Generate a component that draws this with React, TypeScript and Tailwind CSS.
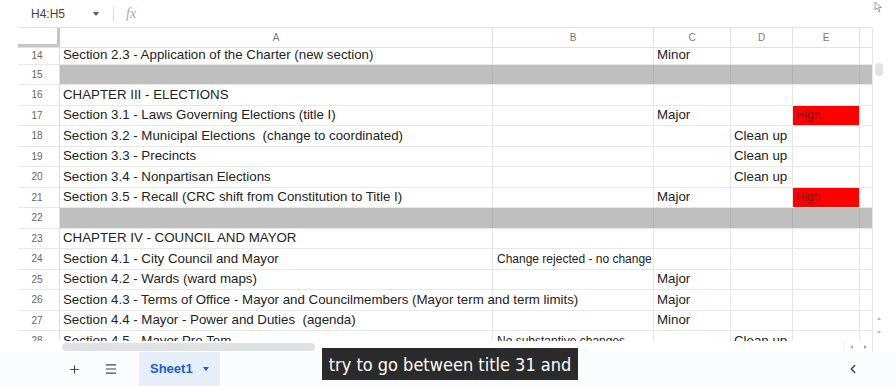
import { Plus, Menu, ChevronLeft } from "lucide-react"

type Row = {
  n: number
  a?: string
  b?: string
  c?: string
  d?: string
  high?: boolean
  gray?: boolean
}

const rows: Row[] = [
  { n: 14, a: "Section 2.3 - Application of the Charter (new section)", c: "Minor" },
  { n: 15, gray: true },
  { n: 16, a: "CHAPTER III - ELECTIONS" },
  { n: 17, a: "Section 3.1 - Laws Governing Elections (title I)", c: "Major", high: true },
  { n: 18, a: "Section 3.2 - Municipal Elections  (change to coordinated)", d: "Clean up" },
  { n: 19, a: "Section 3.3 - Precincts", d: "Clean up" },
  { n: 20, a: "Section 3.4 - Nonpartisan Elections", d: "Clean up" },
  { n: 21, a: "Section 3.5 - Recall (CRC shift from Constitution to Title I)", c: "Major", high: true },
  { n: 22, gray: true },
  { n: 23, a: "CHAPTER IV - COUNCIL AND MAYOR" },
  { n: 24, a: "Section 4.1 - City Council and Mayor", b: "Change rejected - no change" },
  { n: 25, a: "Section 4.2 - Wards (ward maps)", c: "Major" },
  { n: 26, a: "Section 4.3 - Terms of Office - Mayor and Councilmembers (Mayor term and term limits)", c: "Major" },
  { n: 27, a: "Section 4.4 - Mayor - Power and Duties  (agenda)", c: "Minor" },
  { n: 28, a: "Section 4.5 - Mayor Pro Tem", b: "No substantive changes", d: "Clean up" },
]

function Cell({ w, gray, red, children, overflow }: { w: string; gray?: boolean; red?: boolean; children?: React.ReactNode; overflow?: boolean }) {
  const bg = red ? "bg-[#ff0000] border-r-[#e4e4e4]" : gray ? "bg-[#c0bfc0] border-r-[#b2b2b2]" : "border-r-[#e4e4e4]"
  return (
    <div className={`${w} ${bg} relative flex h-full shrink-0 items-center border-r pl-[3px] ${overflow ? "overflow-visible" : "overflow-hidden"}`}>
      {children}
    </div>
  )
}

export default function App() {
  return (
    <div className="relative h-[386px] w-[896px] overflow-hidden bg-white font-['Liberation_Sans',Arial,sans-serif] text-[#222]">
      {/* formula bar */}
      <div className="flex h-[27px] items-center pl-[31px]">
        <span className="w-[62px] text-[12px] text-[#444]">H4:H5</span>
        <span className="h-0 w-0 border-x-[3.5px] border-t-[4px] border-x-transparent border-t-[#555]" />
        <span className="ml-[14px] h-[16px] w-px bg-[#dadce0]" />
        <span className="ml-[12px] font-['Liberation_Serif',serif] text-[14px] italic text-[#aaa]">fx</span>
        <svg className="absolute right-[13px] top-[1px]" width="9" height="12" viewBox="0 0 9 12">
          <path d="M1 1 L1 9 L3 7 L5 11 L6 10.5 L4.5 6.5 L7.5 6.5 Z" fill="white" stroke="#888" strokeWidth="0.8" />
        </svg>
      </div>

      {/* grid */}
      <div className="ml-[18px] flex w-[866px]">
        <div className="w-[854px]">
          {/* column header */}
          <div className="flex h-[21px] border-y border-[#e1e1e1] text-[10px] text-[#777]">
            <div className="h-full w-[42px] shrink-0 border-b-[3px] border-r-[3px] border-[#c4c4c4]" />
            {[
              ["A", "w-[433px]"],
              ["B", "w-[161px]"],
              ["C", "w-[77px]"],
              ["D", "w-[62px]"],
              ["E", "w-[67px]"],
            ].map(([l, w]) => (
              <div key={l} className={`${w} flex shrink-0 items-center justify-center border-r border-[#e1e1e1]`}>
                {l}
              </div>
            ))}
            <div className="w-[12px] shrink-0" />
          </div>

          {/* body */}
          <div className="h-[293px] overflow-hidden">
            <div className="-mt-[4px]">
              {rows.map((r) => (
                <div key={r.n} className={`flex h-[20.5px] border-b border-[#e8e8e8] text-[13.3px] ${r.n === 14 ? "pt-[3px]" : ""}`}>
                  <div className="flex h-full w-[42px] shrink-0 items-center justify-center border-r border-[#dcdcdc] pr-[3px] text-[10px] text-[#666]">
                    {r.n}
                  </div>
                  <Cell w="w-[433px]" gray={r.gray} overflow>
                    <span className="relative z-10 whitespace-pre">{r.a}</span>
                  </Cell>
                  <Cell w="w-[161px]" gray={r.gray}>
                    <span className="whitespace-nowrap pl-[1px] text-[12px]">{r.b}</span>
                  </Cell>
                  <Cell w="w-[77px]" gray={r.gray}>
                    <span className="whitespace-nowrap">{r.c}</span>
                  </Cell>
                  <Cell w="w-[62px]" gray={r.gray}>
                    <span className="whitespace-nowrap">{r.d}</span>
                  </Cell>
                  <Cell w="w-[67px]" gray={r.gray} red={r.high}>
                    {r.high && <span className="text-[12px] text-[#8a0d0d]">High</span>}
                  </Cell>
                  <div className={`h-full w-[12px] shrink-0 ${r.gray ? "bg-[#c0bfc0]" : ""}`} />
                </div>
              ))}
            </div>
          </div>

          {/* horizontal scrollbar */}
          <div className="flex h-[11px] items-center">
            <div className="ml-[44px] h-[8px] w-[253px] rounded-full bg-[#dfe1e5]" />
            <div className="ml-auto flex h-full w-[29px] items-center justify-around border-l border-[#eee]">
              <span className="h-0 w-0 border-y-[2.5px] border-r-[3px] border-y-transparent border-r-[#aaa]" />
              <span className="h-0 w-0 border-y-[2.5px] border-l-[3px] border-y-transparent border-l-[#aaa]" />
            </div>
          </div>
        </div>

        {/* vertical scrollbar */}
        <div className="flex w-[12px] flex-col items-center border-l border-[#e6e6e6]">
          <div className="h-[21px]" />
          <div className="mt-[15px] h-[13px] w-[8px] rounded-full bg-[#dfe1e5]" />
          <div className="flex-1" />
          <span className="h-0 w-0 border-x-[2.5px] border-b-[3px] border-x-transparent border-b-[#bbb]" />
          <span className="mb-[18px] mt-[11px] h-0 w-0 border-x-[2.5px] border-t-[3px] border-x-transparent border-t-[#bbb]" />
        </div>
      </div>

      {/* sheet tabs */}
      <div className="flex h-[34px] items-center bg-[#fbfcfe]">
        <Plus className="ml-[68px] h-[13px] w-[13px] text-[#444]" strokeWidth={2} />
        <Menu className="ml-[23px] h-[14px] w-[14px] text-[#444]" strokeWidth={2} />
        <div className="ml-[21px] flex h-full w-[81px] items-center bg-[#e6eefa] pl-[11px]">
          <span className="text-[13px] font-bold text-[#1a5fc8]">Sheet1</span>
          <span className="ml-[10px] h-0 w-0 border-x-[3.5px] border-t-[4px] border-x-transparent border-t-[#1a5fc8]" />
        </div>
        <ChevronLeft className="ml-auto mr-[36px] h-[14px] w-[14px] text-[#444]" strokeWidth={2.5} />
      </div>

      {/* caption overlay */}
      <div className="absolute left-[322px] top-[348px] flex h-[32px] w-[256px] items-center justify-center bg-[#2b2b2b]">
        <span className="whitespace-nowrap font-['DejaVu_Sans_Condensed','DejaVu_Sans',sans-serif] text-[18px] text-white">
          try to go between title 31 and
        </span>
      </div>
    </div>
  )
}
